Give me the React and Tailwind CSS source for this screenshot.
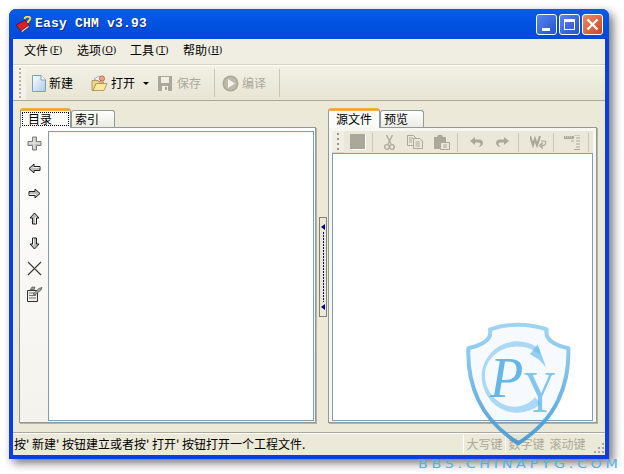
const CJK = { fontFamily: '"Noto Sans CJK SC","Liberation Sans",sans-serif' };

function Mnemonic({ label, k }) {
  return (
    <span className="flex items-center text-[12px] text-black leading-none">
      {label}
      <span className="text-[10px] w-[16px] text-center font-['Liberation_Serif',serif]">
        (<span className="underline">{k}</span>)
      </span>
    </span>
  );
}

function Gripper({ n = 7, gap = "gap-[2px]", color = "bg-[#b4b1a0]" }) {
  return (
    <div className={`flex flex-col ${gap}`}>
      {Array.from({ length: n }).map((_, i) => (
        <div key={i} className={`w-[2px] h-[2px] ${color}`} />
      ))}
    </div>
  );
}

function Sep({ className = "" }) {
  return <div className={`w-[2px] border-l border-[#c9c6b4] shrink-0 ${className}`} />;
}

function NewIcon() {
  return (
    <svg width="14" height="17" viewBox="0 0 14 17">
      <defs>
        <linearGradient id="ng" x1="0" y1="0" x2="1" y2="1">
          <stop offset="0" stopColor="#ffffff" />
          <stop offset="1" stopColor="#a9cbe8" />
        </linearGradient>
      </defs>
      <path d="M.5.5H9L13.5 5V16.5H.5Z" fill="url(#ng)" stroke="#7d9fc4" />
      <path d="M9 .5V5H13.5" fill="#fff" stroke="#7d9fc4" />
    </svg>
  );
}

function OpenIcon() {
  return (
    <svg width="17" height="17" viewBox="0 0 17 17">
      <path d="M3 4 8 1l3 2-2 4z" fill="#f3f3ff" stroke="#8b90c8" strokeWidth=".7" />
      <circle cx="11" cy="3.5" r="2.6" fill="#e9a08e" stroke="#d0563c" strokeWidth=".8" />
      <path d="M1 5.500H7L8 7H12.500V9H5L2 15.500H1Z" fill="#e9d59a" stroke="#a98a3c" strokeWidth=".8" />
      <path d="M5 8.500H16L13 15.500H2Z" fill="#fbe9a9" stroke="#a98a3c" strokeWidth=".8" />
    </svg>
  );
}

function SaveIcon() {
  return (
    <svg width="14" height="15" viewBox="0 0 14 15">
      <path d="M0 0H14V15H0Z" fill="#aca899" />
      <path d="M3 1H11V7H3Z" fill="#f1efe4" />
      <path d="M4 10H10V15H4Z" fill="#f1efe4" />
      <path d="M7 11H9V14H7Z" fill="#aca899" />
    </svg>
  );
}

function PlayIcon() {
  return (
    <svg width="17" height="17" viewBox="0 0 17 17">
      <circle cx="8.500" cy="8.500" r="8" fill="#aca899" />
      <circle cx="8.500" cy="8.500" r="6.500" fill="#bdbaaa" />
      <path d="M6 4 13 8.500 6 13Z" fill="#f4f3ec" />
    </svg>
  );
}

function ArrowIcon({ rot = 0 }) {
  return (
    <svg width="13" height="13" viewBox="0 0 13 13" style={{ transform: `rotate(${rot}deg)` }}>
      <path d="M1 6.500 6 2V4.500H12V8.500H6V11Z" fill="#bcbcb8" stroke="#1f1f1f" strokeWidth="1" strokeLinejoin="miter" />
      <path d="M5 5.500H11.500" stroke="#f2f2f0" strokeWidth="1" />
    </svg>
  );
}

function SideIcons() {
  return (
    <div className="w-[28px] flex flex-col items-center pt-[3px] shrink-0">
      <div className="h-[25px] flex items-center">
        <svg width="15" height="15" viewBox="0 0 15 15">
          <path d="M5.500 1H9.500V5.500H14V9.500H9.500V14H5.500V9.500H1V5.500H5.500Z" fill="#c4c4c2" stroke="#7b7b78" strokeLinejoin="round" />
          <path d="M2 7H13M7 2V13" stroke="#ececea" />
        </svg>
      </div>
      <div className="h-[25px] flex items-center"><ArrowIcon rot={0} /></div>
      <div className="h-[25px] flex items-center"><ArrowIcon rot={180} /></div>
      <div className="h-[25px] flex items-center"><ArrowIcon rot={90} /></div>
      <div className="h-[25px] flex items-center"><ArrowIcon rot={270} /></div>
      <div className="h-[25px] flex items-center">
        <svg width="15" height="15" viewBox="0 0 15 15">
          <path d="M1 1 14 14M14 1 1 14" stroke="#3a3a3a" strokeWidth="1.200" />
          <path d="M2 1 15 14" stroke="#b5b5b2" strokeWidth=".7" />
        </svg>
      </div>
      <div className="h-[25px] flex items-center">
        <svg width="17" height="16" viewBox="0 0 17 16">
          <path d="M1.500 4.500H11.500V15.500H1.500Z" fill="#eeeeea" stroke="#333" />
          <path d="M3 7H10M3 9.500H10M3 12H10" stroke="#777" />
          <path d="M4 4 6 1H9L8 4Z" fill="#999" stroke="#444" strokeWidth=".6" />
          <path d="M7 8 13 2.500 16 1.500 15 4 9 9Z" fill="#a8a8a4" stroke="#444" strokeWidth=".7" />
        </svg>
      </div>
    </div>
  );
}

function RightToolbar() {
  const c = "#aca899";
  return (
    <div className="h-[22px] shrink-0 flex items-center bg-[#ebe8d9] relative">
      <div className="w-[12px] h-full bg-[#f1efe4] flex items-center justify-center shrink-0 border-b border-[#d8d5c4]">
        <Gripper n={4} gap="gap-[3px]" color="bg-[#9a9786]" />
      </div>
      <div className="ml-[6px] w-[15px] h-[15px] bg-[#aca899] border-r border-b border-white box-content shrink-0" />
      <Sep className="ml-[6px] h-[19px]" />
      <div className="ml-[9px] w-[12px] flex justify-center">
        <svg width="11" height="15" viewBox="0 0 11 15">
          <path d="M2.500 0 7 9M8.500 0 4 9" stroke={c} strokeWidth="1.300" fill="none" />
          <circle cx="3" cy="12" r="2.300" stroke={c} strokeWidth="1.300" fill="none" />
          <circle cx="8" cy="12" r="2.300" stroke={c} strokeWidth="1.300" fill="none" />
        </svg>
      </div>
      <div className="ml-[12px]">
        <svg width="16" height="14" viewBox="0 0 16 14">
          <path d="M.5.5H6.500L9 3V10.500H.5Z" fill="#ebe8d9" stroke={c} />
          <path d="M6.500 3.500H12.500L15.500 6V13.500H6.500Z" fill="#ebe8d9" stroke={c} />
          <path d="M2 3H6M2 5H5M2 7H5M8.500 7H13M8.500 9H13M8.500 11H13" stroke={c} />
        </svg>
      </div>
      <div className="ml-[10px]">
        <svg width="17" height="15" viewBox="0 0 17 15">
          <path d="M1 2H4L5 0H9L10 2H13V14H1Z" fill={c} />
          <path d="M7.500 7.500H16.500V14.500H7.500Z" fill="#ebe8d9" stroke={c} />
          <path d="M10 10H14M10 12H14" stroke={c} />
        </svg>
      </div>
      <Sep className="ml-[7px] h-[19px]" />
      <div className="ml-[11px]">
        <svg width="13" height="10" viewBox="0 0 13 10">
          <path d="M0 4 5 0V2.500H9C12 2.500 13 4.500 13 6 13 8 11 10 8 10 10 9 10.500 8 10.500 7 10.500 6 9.500 5.500 8 5.500H5V8Z" fill={c} />
        </svg>
      </div>
      <div className="ml-[13px]">
        <svg width="13" height="10" viewBox="0 0 13 10" style={{ transform: "scaleX(-1)" }}>
          <path d="M0 4 5 0V2.500H9C12 2.500 13 4.500 13 6 13 8 11 10 8 10 10 9 10.500 8 10.500 7 10.500 6 9.500 5.500 8 5.500H5V8Z" fill={c} />
        </svg>
      </div>
      <Sep className="ml-[9px] h-[19px]" />
      <div className="ml-[10px]">
        <svg width="17" height="15" viewBox="0 0 17 15">
          <path d="M0 1 3 10 5 4 7 10 10 1" fill="none" stroke={c} strokeWidth="2.200" />
          <path d="M11 6H14Q16.500 6 15.500 9 14.500 11 12 10.500M12 8V13L9.500 10.500Z" fill="none" stroke={c} strokeWidth="1.200" />
        </svg>
      </div>
      <Sep className="ml-[6px] h-[19px]" />
      <div className="ml-[9px]">
        <svg width="16" height="15" viewBox="0 0 16 15">
          <path d="M0 1H10V4H0Z" fill={c} />
          <path d="M1 2H2M3 2H4M5 2H6M7 2H8" stroke="#ebe8d9" />
          <path d="M7 6H10M10 0H16M12 3H16M12 6H16M12 9H16M12 12H16M10 14.500H16" stroke={c} strokeWidth="1.200" />
        </svg>
      </div>
      <Sep className="ml-[8px] h-[19px]" />
    </div>
  );
}

function Tab({ active, children, w }) {
  if (active) {
    return (
      <div className="relative z-10 h-[20px] bg-[#fbfbf9] rounded-t-[3px] border-x border-[#919b9c] border-t-[3px] border-t-[#f2a83a] flex justify-center shrink-0" style={{ width: w }}>
        <span className="text-[12px] leading-[15px] text-black">{children}</span>
      </div>
    );
  }
  return (
    <div className="h-[17px] mt-[2px] bg-gradient-to-b from-white to-[#ecebe3] rounded-t-[3px] border-x border-t border-[#919b9c] flex items-center pl-[3px] shrink-0" style={{ width: w }}>
      <span className="text-[12px] leading-none text-black">{children}</span>
    </div>
  );
}

function Watermark() {
  const blue = "#56aee6";
  return (
    <svg className="absolute left-[440px] top-[310px] pointer-events-none" width="184" height="164" viewBox="0 0 552 492">
      <defs>
        <linearGradient id="wm" x1="0" y1="0" x2="0" y2="1">
          <stop offset="0" stopColor="#8fcdf2" stopOpacity=".85" />
          <stop offset="1" stopColor="#3f96d2" stopOpacity=".9" />
        </linearGradient>
      </defs>
      <path
        d="M235 44Q190 44 150 58 155 85 130 98 110 110 85 115 82 200 115 270 150 345 235 400 320 345 355 270 388 200 385 115 360 110 340 98 315 85 320 58 280 44 235 44Z"
        fill="#4aa6e2" fillOpacity=".05" stroke="url(#wm)" strokeWidth="12" strokeLinejoin="round"
      />
      <path d="M300 118A108 108 0 0 0 125 190C122 255 170 310 235 308 262 307 285 298 302 280L285 262C265 285 235 295 205 288 165 278 135 240 135 195 135 150 175 112 225 110 255 108 280 118 300 135Z" fill="#6cbcec" fillOpacity=".55" />
      <path d="M293 103 318 172 298 150 270 132Z" fill="#6cbcec" fillOpacity=".7" />
      <text x="150" y="262" textLength="100" lengthAdjust="spacingAndGlyphs" fontFamily="'Liberation Serif',serif" fontStyle="italic" fontSize="172" fill={blue} fillOpacity=".9">P</text>
      <text x="252" y="306" textLength="96" lengthAdjust="spacingAndGlyphs" fontFamily="'Liberation Serif',serif" fontSize="178" fill={blue} fillOpacity=".7">Y</text>
    </svg>
  );
}

export default function App() {
  return (
    <div className="relative w-[624px] h-[474px] bg-white overflow-hidden pt-[9px] pl-[9px]" style={CJK}>
      <div className="w-[600px] h-[450px] flex flex-col rounded-t-[7px] bg-[#0a3ee0] shadow-[4px_4px_10px_rgba(0,0,0,0.55)]">
        {/* title bar */}
        <div className="h-[30px] shrink-0 rounded-t-[7px] flex items-center pl-[6px] pr-[6px] bg-gradient-to-b from-[#0a5be8] via-[#0052e0] to-[#0249d6]">
          <svg width="17" height="17" viewBox="0 0 17 17" className="shrink-0">
            <path d="M1 9 10 4 14 9 6 15Z" fill="#d8202a" stroke="#5a0f14" strokeWidth=".8" />
            <path d="M6 15 14 9V11L7 16.500Z" fill="#f2e6d0" stroke="#5a0f14" strokeWidth=".6" />
            <path d="M9.500 3Q10 0.500 13 .5 16 1 15 3.500 14 4.500 13 5.500V7" fill="none" stroke="#f5dd3a" strokeWidth="1.800" />
          </svg>
          <span className="ml-[3px] text-[13px] font-bold text-white tracking-[0.2px] font-['Liberation_Mono',monospace] [text-shadow:1px_1px_0_#0a2a8a]">
            Easy CHM v3.93
          </span>
          <div className="ml-auto flex gap-[2px]">
            <div className="w-[21px] h-[21px] rounded-[3px] border border-white bg-gradient-to-br from-[#5a86ee] to-[#2450d0] flex items-end pl-[5px] pb-[3px]">
              <div className="w-[8px] h-[3px] bg-white" />
            </div>
            <div className="w-[21px] h-[21px] rounded-[3px] border border-white bg-gradient-to-br from-[#5a86ee] to-[#2450d0] flex items-center justify-center">
              <div className="w-[11px] h-[11px] border border-white border-t-[3px]" />
            </div>
            <div className="w-[21px] h-[21px] rounded-[3px] border border-white bg-gradient-to-br from-[#ea8a64] to-[#cc4420] flex items-center justify-center">
              <svg width="13" height="13" viewBox="0 0 13 13">
                <path d="M1.500 1.500 11.500 11.500M11.500 1.500 1.500 11.500" stroke="#fff" strokeWidth="2.400" />
              </svg>
            </div>
          </div>
        </div>

        {/* client */}
        <div className="flex-1 mx-[4px] mb-[4px] flex flex-col bg-[#ece9d8] min-h-0">
          {/* menu */}
          <div className="h-[26px] shrink-0 flex items-center pl-[11px] pb-[3px] gap-[13px] bg-[#f0eee2] border-b border-[#d6d2bd]">
            <Mnemonic label="文件" k="F" />
            <Mnemonic label="选项" k="O" />
            <Mnemonic label="工具" k="T" />
            <Mnemonic label="帮助" k="H" />
          </div>
          {/* toolbar */}
          <div className="h-[36px] shrink-0 flex border-t border-white border-b border-b-[#aca899] bg-gradient-to-b from-[#f2f0e5] to-[#e8e5d4]">
            <div className="w-[13px] bg-[#f3f1e8] flex items-center justify-center shrink-0">
              <Gripper n={8} />
            </div>
            <div className="flex-1 flex items-center text-[12px]">
              <div className="ml-[6px]"><NewIcon /></div>
              <span className="ml-[3px] text-black">新建</span>
              <div className="ml-[18px]"><OpenIcon /></div>
              <span className="ml-[3px] text-black">打开</span>
              <div className="ml-[8px] w-0 h-0 border-x-[3px] border-x-transparent border-t-[3px] border-t-black" />
              <div className="ml-[9px]"><SaveIcon /></div>
              <span className="ml-[5px] text-[#aca899]">保存</span>
              <Sep className="ml-[13px] h-[28px]" />
              <div className="ml-[6px]"><PlayIcon /></div>
              <span className="ml-[3px] text-[#aca899]">编译</span>
              <Sep className="ml-[13px] h-[28px]" />
            </div>
          </div>

          {/* main */}
          <div className="flex-1 min-h-0 flex pt-[7px] pl-[6px] pr-[8px] pb-[9px]">
            {/* left */}
            <div className="w-[297px] shrink-0 flex flex-col">
              <div className="flex items-start pl-[1px] h-[19px] shrink-0">
                <Tab active w="51px">
                  <span className="block w-[47px] h-[14px] mt-[1px] border border-dotted border-black leading-[12px] pl-[5px]">目录</span>
                </Tab>
                <Tab w="44px">索引</Tab>
              </div>
              <div className="flex-1 min-h-0 flex border border-[#919b9c] bg-gradient-to-b from-white to-[#f3f2ec] shadow-[1px_1px_0_#b5b3a5] pr-[1px] pb-[1px]">
                <SideIcons />
                <div className="flex-1 mt-[3px] bg-white border border-[#7f9db9]" />
              </div>
            </div>

            {/* splitter */}
            <div className="flex-1 flex items-center justify-center">
              <div className="w-[8px] h-[100px] ml-[2px] mt-[2px] border border-[#808080] bg-[#ece9d8] flex flex-col items-center py-[6px]">
                <div className="w-0 h-0 border-y-[3px] border-y-transparent border-r-[4px] border-r-[#00008b]" />
                <div className="flex-1 my-[2px] w-[1px] bg-[repeating-linear-gradient(to_bottom,#00008b_0,#00008b_2px,transparent_2px,transparent_3px)]" />
                <div className="w-0 h-0 border-y-[3px] border-y-transparent border-r-[4px] border-r-[#00008b]" />
              </div>
            </div>

            {/* right */}
            <div className="w-[269px] shrink-0 flex flex-col">
              <div className="flex items-start h-[19px] shrink-0">
                <Tab active w="52px">源文件</Tab>
                <Tab w="44px">预览</Tab>
              </div>
              <div className="flex-1 min-h-0 flex flex-col border border-[#919b9c] bg-[#f7f6f1] shadow-[1px_1px_0_#b5b3a5] px-[3px] pt-[3px] pb-[1px]">
                <RightToolbar />
                <div className="flex-1 bg-white border border-[#7f9db9]" />
              </div>
            </div>
          </div>

          {/* status */}
          <div className="h-[23px] shrink-0 relative flex items-center border-t border-[#aca899] text-[12px] pl-[1px] bg-[#ece9d8] shadow-[inset_0_1px_0_#fff]">
            <span className="text-black whitespace-nowrap flex-1">按' 新建' 按钮建立或者按' 打开' 按钮打开一个工程文件.</span>
            <div className="flex items-center h-full text-[#aca899]">
              <span className="w-[42px] text-center border-l border-white">大写键</span>
              <span className="w-[42px] text-center border-l border-white">数字键</span>
              <span className="w-[41px] text-center">滚动键</span>
            </div>
            <svg width="17" height="14" viewBox="2 0 17 14" className="self-end shrink-0">
              <path d="M16 2h2v2h-2zM12 6h2v2h-2zM16 6h2v2h-2zM8 10h2v2H8zM12 10h2v2h-2zM16 10h2v2h-2z" fill="#aca899" />
            </svg>
          </div>
        </div>
      </div>

      <Watermark />
      <span className="absolute left-[418px] top-[458px] text-[12px] leading-[13px] tracking-[3.1px] text-[#5aade5] font-['DejaVu_Sans',sans-serif] whitespace-nowrap origin-left scale-x-[1.19]">
        BBS.CHINAPYG.COM
      </span>
    </div>
  );
}
